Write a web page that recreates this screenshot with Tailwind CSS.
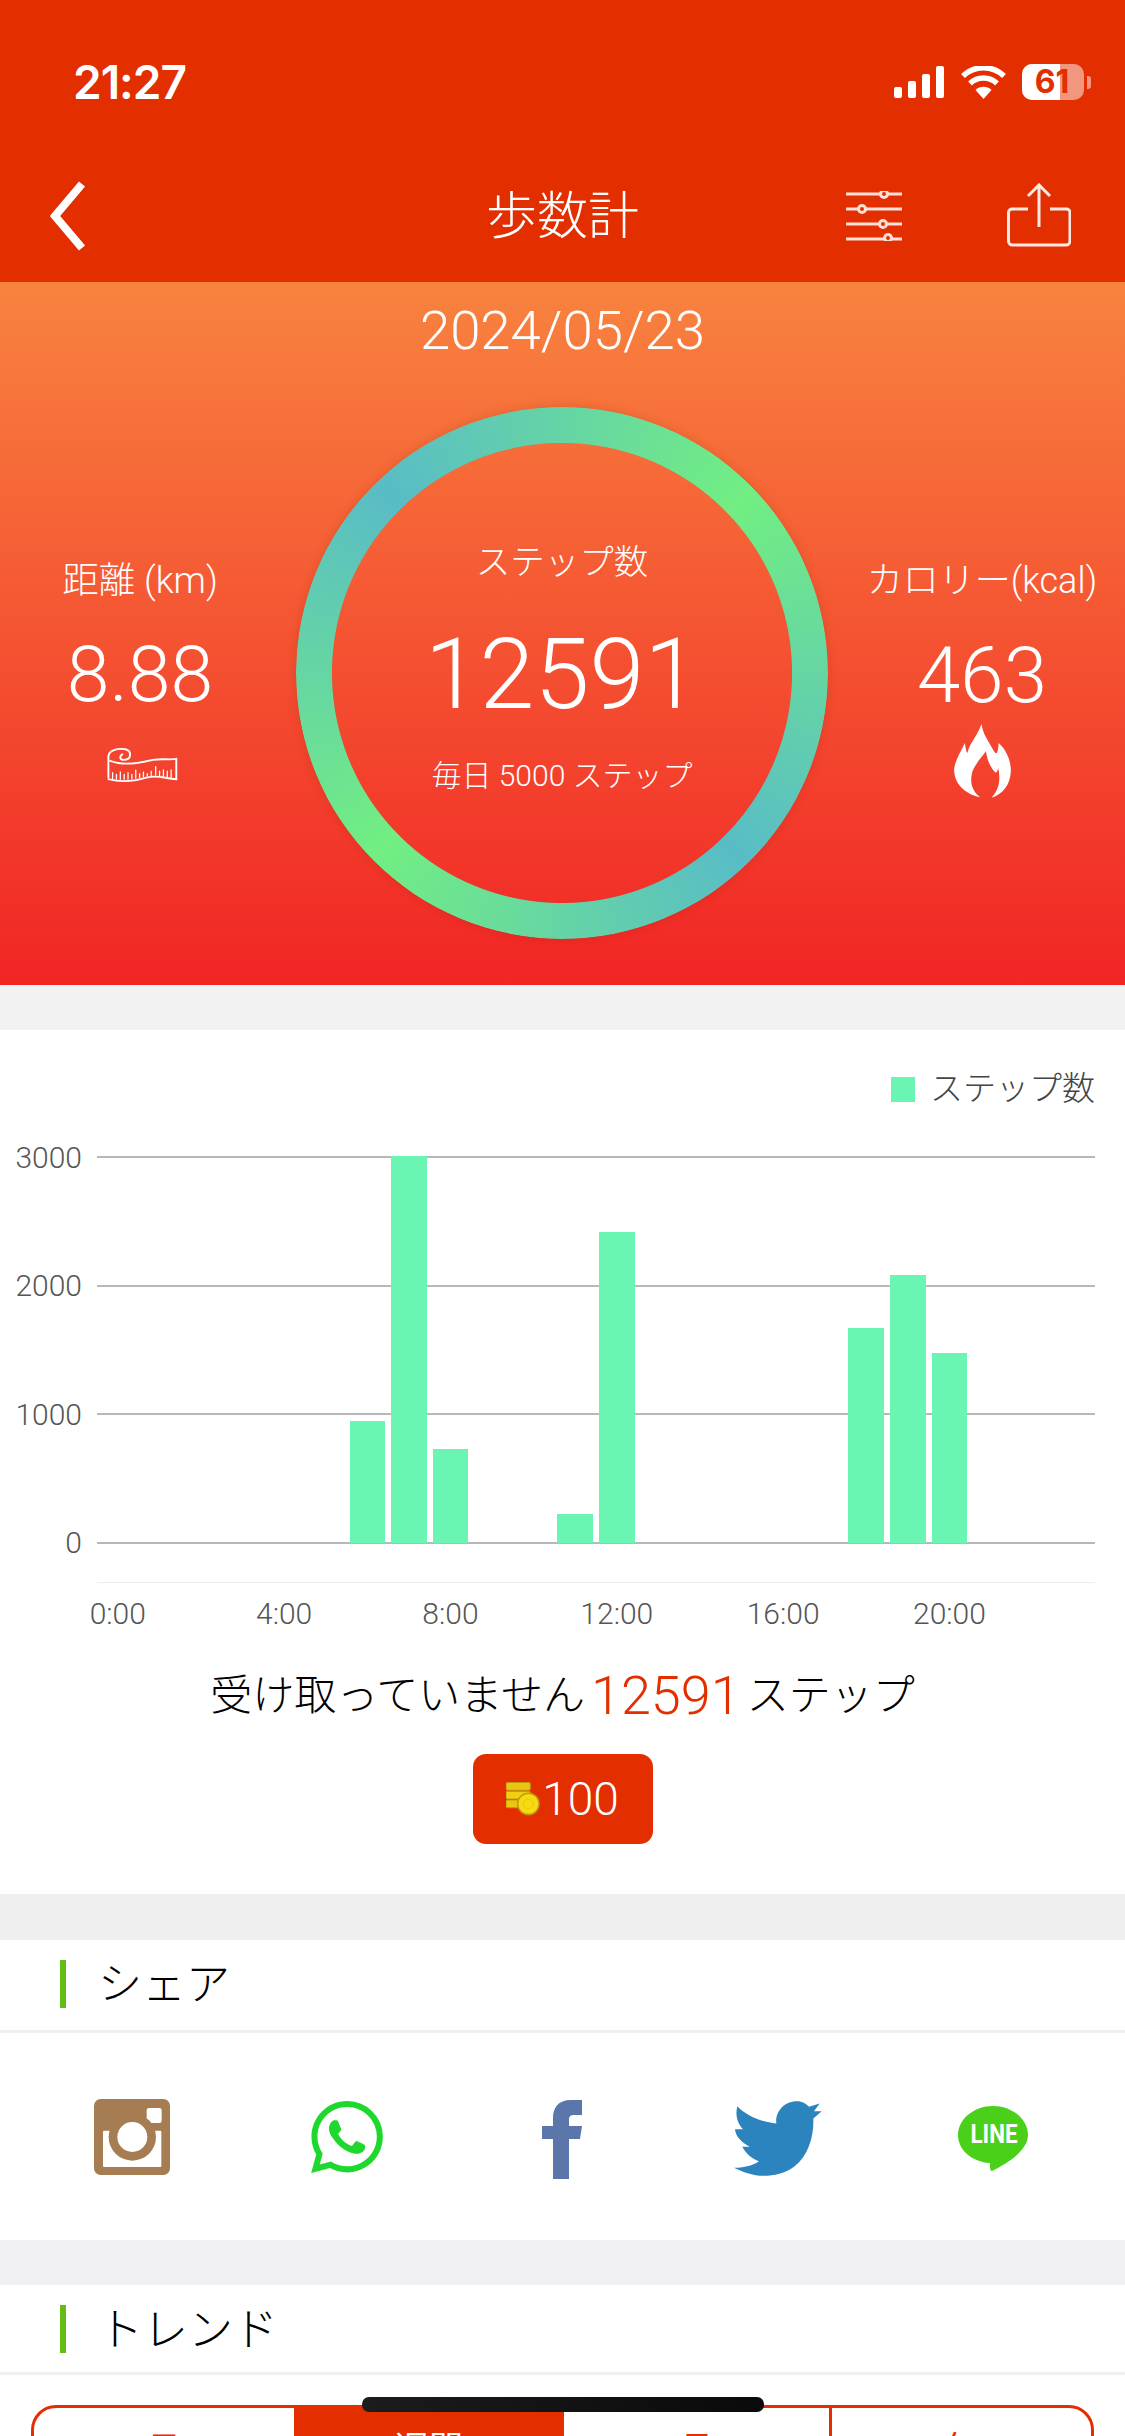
<!DOCTYPE html>
<html lang="ja">
<head>
    <meta charset="UTF-8">
    <title>歩数計</title>
    <script src="https://cdn.jsdelivr.net/npm/@tailwindcss/browser@4"></script>
</head>
<body class="bg-white font-['Roboto','Noto_Sans_CJK_JP',sans-serif] font-light">
<div class="relative w-[1125px] h-[2436px] overflow-hidden">

    <!-- header -->
    <header class="h-[282px] bg-[#e32e00] text-white">
        <div class="h-[150px] pt-[60px] pl-[73px] pr-[34px] flex justify-between">
            <div class="h-[44px] flex items-center font-['Inter',sans-serif] font-semibold text-[46px] tracking-[-1px]">21:27</div>
            <div class="h-[44px] flex items-center">
                <div class="flex items-end gap-[5.5px] h-[32px]">
                    <div class="w-[8.5px] h-[11px] rounded-[2px] bg-white"></div>
                    <div class="w-[8.5px] h-[17px] rounded-[2px] bg-white"></div>
                    <div class="w-[8.5px] h-[24px] rounded-[2px] bg-white"></div>
                    <div class="w-[8.5px] h-[32px] rounded-[2px] bg-white"></div>
                </div>
                <svg class="ml-[17px]" width="45" height="33" viewBox="0 0 45 33" fill="none" stroke="#fff">
                    <path d="M22.5 33 L14.5 24 A11.5 11.5 0 0 1 30.5 24 Z" fill="#fff" stroke="none"/>
                    <path d="M9 17.5 A19.5 19.5 0 0 1 36 17.5" stroke-width="5.5"/>
                    <path d="M2 10 A29.5 29.5 0 0 1 43 10" stroke-width="5.5"/>
                </svg>
                <div class="relative ml-[16px] w-[62px] h-[36px] rounded-[10px] bg-white/50 flex items-center justify-center">
                    <div class="absolute left-0 top-0 w-[38px] h-full rounded-l-[10px] bg-white"></div>
                    <span class="relative font-['Inter',sans-serif] font-bold text-[32px] text-[#e32e00] leading-none ml-[-2px]">61</span>
                </div>
                <div class="ml-[3px] w-[4px] h-[13px] rounded-r-[3px] bg-white/50"></div>
            </div>
        </div>
        <nav class="h-[132px] grid grid-cols-3 items-center">
            <div class="pl-[49px]">
                <svg width="37" height="70" viewBox="0 0 37 70" fill="none" stroke="#fff" stroke-width="8" stroke-linejoin="miter">
                    <path d="M33 3 L6 35 L33 67"/>
                </svg>
            </div>
            <div class="text-center text-[51px] leading-none">歩数計</div>
            <div class="flex justify-end items-center pr-[54px] gap-[105px]">
                <svg width="56" height="50" viewBox="0 0 56 50" fill="none" stroke="#fde0d8" stroke-width="3">
                    <path d="M0 3H56M0 18H56M0 33H56M0 48H56"/>
                    <circle cx="38" cy="3" r="3.5" fill="#e32e00"/>
                    <circle cx="16" cy="18" r="3.5" fill="#e32e00"/>
                    <circle cx="37" cy="33" r="3.5" fill="#e32e00"/>
                    <circle cx="42" cy="47" r="3.5" fill="#e32e00"/>
                </svg>
                <svg class="mt-[-3px]" width="64" height="64" viewBox="0 0 64 64" fill="none" stroke="#fde9e3" stroke-width="3">
                    <path d="M21 26H5a3.500 3.500 0 0 0-3.500 3.500V58a4 4 0 0 0 4 4H59a4 4 0 0 0 4-4V29.500A3.500 3.500 0 0 0 59.500 26H43"/>
                    <path d="M32 2V44M21 13L32 2L43 13"/>
                </svg>
            </div>
        </nav>
    </header>

    <!-- today's totals -->
    <section class="h-[703px] bg-[linear-gradient(180deg,#f8833f,#f12525)] text-white">
        <div class="h-[94px] pt-[2px] flex items-center justify-center text-[54.5px] leading-none">2024/05/23</div>
        <div class="flex mt-[31px]">
            <div class="w-[280px] mr-[16px] pt-[149px] flex flex-col items-center">
                <div class="h-[50px] flex items-center text-[36.5px]">距離 (km)</div>
                <div class="h-[90px] mt-[25px] flex items-center text-[77px]">8.88</div>
                <svg class="mt-[26px] ml-[5px]" width="73" height="37" viewBox="78 105 220 115" fill="none" stroke="#fff" stroke-width="6" stroke-linecap="round">
                    <path d="M82 200V135C82 115 110 108 135 112C155 117 155 145 130 145C118 145 115 135 125 128"/>
                    <path d="M88 148C130 165 180 155 220 145C250 140 275 146 293 142V205C260 205 240 190 200 200C160 212 120 215 82 205"/>
                    <path stroke-width="4" d="M95 185V203M107 190V205M119 182V205M131 190V205M143 185V205M155 190V204M167 177V202M179 188V200M191 183V198M203 188V196M215 180V194M229 166V192M241 180V194M253 176V196M265 180V200M277 176V201"/>
                </svg>
            </div>
            <div class="relative w-[532px] h-[532px] shrink-0">
                <div class="absolute inset-0 rounded-full shadow-[0_0_10px_rgba(120,40,0,0.2)]"></div>
                <div class="absolute inset-[36px] rounded-full shadow-[0_0_10px_rgba(120,40,0,0.2)]"></div>
                <div class="absolute inset-0 rounded-full bg-[conic-gradient(from_46deg,#72ee82,#59bcc6_90deg,#72ee82_180deg,#59bcc6_270deg,#72ee82)] [mask-image:radial-gradient(closest-side,transparent_229.5px,#000_230.5px)]"></div>
                <div class="relative pt-[131px] flex flex-col items-center">
                    <div class="h-[50px] flex items-center text-[34.5px]">ステップ数</div>
                    <div class="h-[120px] mt-[26px] flex items-center text-[99px]">12591</div>
                    <div class="h-[40px] mt-[21px] flex items-center text-[30px]">毎日 5000 ステップ</div>
                </div>
            </div>
            <div class="w-[284px] ml-[12px] pt-[149px] flex flex-col items-center">
                <div class="h-[50px] flex items-center text-[36px] whitespace-nowrap">カロリー(kcal)</div>
                <div class="h-[90px] mt-[24px] flex items-center text-[78px]">463</div>
                <svg class="mt-[3px]" width="57" height="75" viewBox="105 70 170 225" fill="#fff">
                    <path d="M187 72C190 100 205 120 222 150C228 160 232 165 235 155C238 145 238 135 238 130C262 150 276 185 275 215C274 255 250 285 217 294C240 270 245 240 237 205C235 215 232 220 228 218C215 205 205 185 200 155C190 170 170 190 160 215C150 250 160 275 183 293C145 285 108 260 105 215C104 190 120 165 137 130C140 145 140 155 145 160C150 130 175 110 187 72Z"/>
                </svg>
            </div>
        </div>
    </section>

    <div class="h-[45px] bg-[#f2f2f2]"></div>

    <!-- hourly chart -->
    <section class="h-[864px] bg-white">
        <div class="pt-[39px] h-[126px] pr-[30px] flex justify-end">
            <div class="h-[40px] flex items-center text-[33px] text-[#444]">
                <span class="w-[24px] h-[25px] bg-[#6bf5b2] mr-[15px]"></span>ステップ数
            </div>
        </div>
        <div class="flex">
            <div class="w-[82px] mr-[15px] h-[388px] flex flex-col justify-between text-[30px] text-[#555]">
                <div class="h-[2px] flex items-center justify-end">3000</div>
                <div class="h-[2px] flex items-center justify-end">2000</div>
                <div class="h-[2px] flex items-center justify-end">1000</div>
                <div class="h-[2px] flex items-center justify-end">0</div>
            </div>
            <div class="relative w-[998px] h-[388px]">
                <div class="absolute inset-0 flex flex-col justify-between">
                    <div class="h-[2px] bg-[#b8b8b8]"></div>
                    <div class="h-[2px] bg-[#b8b8b8]"></div>
                    <div class="h-[2px] bg-[#b8b8b8]"></div>
                    <div class="h-[2px] bg-[#b8b8b8]"></div>
                </div>
                <div class="relative h-[387px] grid grid-cols-24 items-end">
                    <div class="col-start-7 mx-[3px] h-[122px] bg-[#6bf5b2]"></div>
                    <div class="col-start-8 mx-[3px] h-[387px] bg-[#6bf5b2]"></div>
                    <div class="col-start-9 mx-[3px] h-[94px] bg-[#6bf5b2]"></div>
                    <div class="col-start-12 mx-[3px] h-[29px] bg-[#6bf5b2]"></div>
                    <div class="col-start-13 mx-[3px] h-[311px] bg-[#6bf5b2]"></div>
                    <div class="col-start-19 mx-[3px] h-[215px] bg-[#6bf5b2]"></div>
                    <div class="col-start-20 mx-[3px] h-[268px] bg-[#6bf5b2]"></div>
                    <div class="col-start-21 mx-[3px] h-[190px] bg-[#6bf5b2]"></div>
                </div>
            </div>
        </div>
        <div class="ml-[97px] w-[998px] h-[1px] mt-[38px] bg-[#eeeeee]"></div>
        <div class="ml-[97px] w-[998px] h-[40px] mt-[8px] grid grid-cols-24 text-[30px] text-[#555]">
            <div class="col-start-1 flex justify-center items-center whitespace-nowrap">0:00</div>
            <div class="col-start-5 flex justify-center items-center whitespace-nowrap">4:00</div>
            <div class="col-start-9 flex justify-center items-center whitespace-nowrap">8:00</div>
            <div class="col-start-13 flex justify-center items-center whitespace-nowrap">12:00</div>
            <div class="col-start-17 flex justify-center items-center whitespace-nowrap">16:00</div>
            <div class="col-start-21 flex justify-center items-center whitespace-nowrap">20:00</div>
        </div>
        <div class="h-[60px] mt-[34px] flex items-center justify-center text-[42px] text-black">
            受け取っていません<span class="mx-[6px] text-[54px] text-[#e32e00]">12591</span>ステップ
        </div>
        <div class="mt-[29px] flex justify-center">
            <div class="w-[180px] h-[90px] rounded-[13px] bg-[#e32e00] flex items-center justify-center text-white text-[46px]">
                <svg class="mr-[2px]" width="34" height="34" viewBox="0 0 35 34">
                    <rect x="0" y="0" width="25" height="8" rx="1.500" fill="#e9c515" stroke="#c29a08"/>
                    <rect x="0" y="9" width="25" height="8" rx="1.500" fill="#f2cf14" stroke="#c29a08"/>
                    <rect x="0" y="18" width="25" height="8" rx="1.500" fill="#e9c515" stroke="#c29a08"/>
                    <circle cx="23" cy="22" r="11" fill="#f6da12" stroke="#c29a08" stroke-width="1.500"/>
                    <circle cx="23" cy="22" r="5" fill="none" stroke="#eac60f"/>
                </svg>
                100
            </div>
        </div>
    </section>

    <div class="h-[46px] bg-[#efefef]"></div>

    <!-- share -->
    <section class="bg-white">
        <div class="h-[90px] pl-[60px] flex items-center">
            <span class="w-[6px] h-[48px] bg-[#64bd14] mr-[32px] mt-[-2px]"></span>
            <span class="text-[44px] leading-none text-black">シェア</span>
        </div>
        <div class="h-[3px] bg-[#efefef]"></div>
        <div class="h-[207px] px-[24px] grid grid-cols-5 items-center justify-items-center">
            <svg width="76" height="76" viewBox="0 0 228 228">
                <rect width="228" height="228" rx="20" fill="#a67c52"/>
                <rect x="158" y="27" width="45" height="45" rx="7" fill="#fff"/>
                <rect x="27" y="95" width="175" height="109" rx="3" fill="#fff"/>
                <circle cx="115" cy="114" r="71" fill="#a67c52"/>
                <circle cx="115" cy="114" r="45" fill="#fff"/>
            </svg>
            <svg width="72" height="72" viewBox="0 0 24 24" fill="#1ed82e">
                <path d="M17.472 14.382c-.297-.149-1.758-.867-2.03-.967-.273-.099-.471-.148-.67.15-.197.297-.767.966-.94 1.164-.173.199-.347.223-.644.075-.297-.15-1.255-.463-2.39-1.475-.883-.788-1.48-1.761-1.653-2.059-.173-.297-.018-.458.13-.606.134-.133.298-.347.446-.52.149-.174.198-.298.298-.497.099-.198.05-.371-.025-.52-.075-.149-.669-1.612-.916-2.207-.242-.579-.487-.5-.669-.51-.173-.008-.371-.01-.57-.01-.198 0-.52.074-.792.372-.272.297-1.04 1.016-1.04 2.479 0 1.462 1.065 2.875 1.213 3.074.149.198 2.096 3.2 5.077 4.487.709.306 1.262.489 1.694.625.712.227 1.36.195 1.871.118.571-.085 1.758-.719 2.006-1.413.248-.694.248-1.289.173-1.413-.074-.124-.272-.198-.57-.347m-5.421 7.403h-.004a9.87 9.87 0 01-5.031-1.378l-.361-.214-3.741.982.998-3.648-.235-.374a9.86 9.86 0 01-1.51-5.26c.001-5.45 4.436-9.884 9.888-9.884 2.64 0 5.122 1.03 6.988 2.898a9.825 9.825 0 012.893 6.994c-.003 5.45-4.437 9.884-9.885 9.884m8.413-18.297A11.815 11.815 0 0012.05 0C5.495 0 .16 5.335.157 11.892c0 2.096.547 4.142 1.588 5.945L.057 24l6.305-1.654a11.882 11.882 0 005.683 1.448h.005c6.554 0 11.89-5.335 11.893-11.893a11.821 11.821 0 00-3.48-8.413z"/>
            </svg>
            <svg width="40" height="79" viewBox="0 0 40 79" fill="#5a76aa" class="mt-[5px]">
                <path d="M40 0H29C16 0 11 8 11 18V26H0V39H11V79H27V39H38L40 26H27V20C27 16 29 15 32 15H40Z"/>
            </svg>
            <svg width="88" height="75" viewBox="95 128 264 224" fill="#2c84be" class="mt-[4px]">
                <path d="M105 143C130 170 175 190 222 195C218 165 240 128 285 128C300 128 312 136 320 145L352 135L335 158L358 158L333 180C335 230 320 290 275 325C240 352 190 355 160 350C135 346 115 338 95 328C120 328 150 322 170 308C150 303 130 285 120 265L142 265C118 250 100 235 98 212L122 212C105 195 98 170 105 143Z"/>
            </svg>
            <svg width="70" height="65" viewBox="0 0 70 65" class="mt-[4px]">
                <path d="M35 0C54 0 70 13 70 29C70 45 48 58 34 65C32 65 32 62 32 57C14 56 0 44 0 29C0 13 16 0 35 0Z" fill="#4bd01a"/>
                <text x="36" y="37" text-anchor="middle" font-family="Roboto" font-weight="700" font-size="25" textLength="47" lengthAdjust="spacingAndGlyphs" fill="#fff">LINE</text>
            </svg>
        </div>
    </section>

    <div class="h-[45px] bg-[#efeff4]"></div>

    <!-- trend -->
    <section class="bg-white">
        <div class="h-[87px] pl-[60px] flex items-center">
            <span class="w-[6px] h-[48px] bg-[#64bd14] mr-[32px]"></span>
            <span class="text-[45px] leading-none text-black mt-[3px]">トレンド</span>
        </div>
        <div class="h-[3px] bg-[#efefef]"></div>
        <div class="mx-[31px] mt-[30px] h-[120px] border-[3px] border-[#e32e00] rounded-[25px] overflow-hidden grid grid-cols-[260px_270px_268px_1fr] text-[34px] leading-none text-[#e32e00] font-normal text-center">
            <div class="pt-[24px]">日</div>
            <div class="pt-[24px] bg-[#e32e00] text-white">週間</div>
            <div class="pt-[24px] border-r-[3px] border-[#e32e00]">月</div>
            <div class="pt-[24px]">年</div>
        </div>
    </section>

    <!-- home indicator -->
    <div class="absolute left-[362px] top-[2397px] w-[402px] h-[15px] rounded-[7px] bg-gradient-to-r from-[#1c1c1c] to-[#0a0a0a]"></div>
</div>
</body>
</html>
